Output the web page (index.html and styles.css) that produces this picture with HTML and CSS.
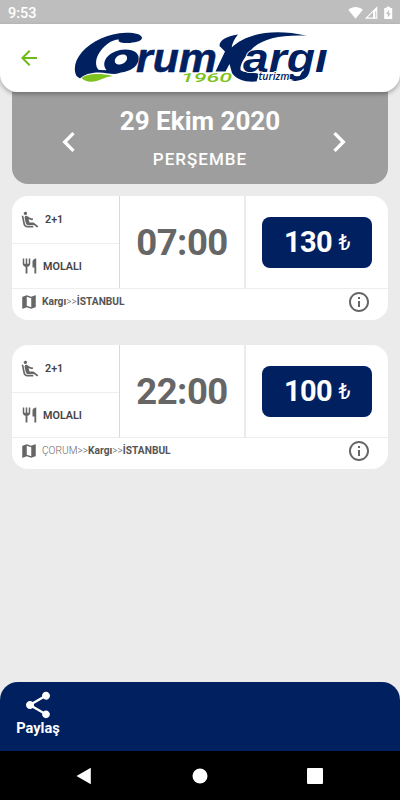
FILE: index.html
```html
<!DOCTYPE html>
<html lang="tr">
<head>
    <meta charset="UTF-8">
    <meta name="viewport" content="width=device-width, initial-scale=1.0">
    <title>Çorum Kargı Turizm</title>
    <link rel="stylesheet" href="styles.css">
</head>
<body>
    <svg class="sprite" width="0" height="0">
        <symbol id="seat" viewBox="0 0 24 24">
            <path d="M5.35 5.64c-.9-.64-1.12-1.88-.49-2.79.63-.9 1.88-1.12 2.79-.49.9.64 1.12 1.88.49 2.79-.64.9-1.88 1.12-2.79.49zM16 19H8.93c-1.48 0-2.74-1.08-2.96-2.54L4 7H2l1.99 9.76C4.37 19.2 6.47 21 8.94 21H16v-2zm.23-4h-4.88l-1.03-4.1c1.58.89 3.28 1.54 5.15 1.22V9.99c-1.63.31-3.44-.27-4.69-1.25L9.14 7.47c-.23-.18-.49-.3-.76-.38-.32-.09-.66-.12-.99-.06h-.02c-1.23.22-2.05 1.39-1.84 2.61l1.35 5.92C7.16 16.98 8.39 18 9.83 18h6.85l3.82 3 1.5-1.5-5.77-4.5z"/>
        </symbol>
        <symbol id="food" viewBox="0 0 24 24">
            <path d="M11 9H9V2H7v7H5V2H3v7c0 2.12 1.66 3.84 3.75 3.97V22h2.5v-9.03C11.34 12.84 13 11.12 13 9V2h-2v7zm5-3v8h2.5v8H21V2c-2.76 0-5 2.24-5 4z"/>
        </symbol>
        <symbol id="map" viewBox="0 0 24 24">
            <path d="M20.5 3l-.16.03L15 5.1 9 3 3.36 4.9c-.21.07-.36.25-.36.48V20.5c0 .28.22.5.5.5l.16-.03L9 18.9l6 2.1 5.64-1.9c.21-.07.36-.25.36-.48V3.5c0-.28-.22-.5-.5-.5zM15 19l-6-2.11V5l6 2.11V19z"/>
        </symbol>
        <symbol id="info" viewBox="0 0 24 24">
            <path d="M11 7h2v2h-2zm0 4h2v6h-2zm1-9C6.48 2 2 6.48 2 12s4.48 10 10 10 10-4.48 10-10S17.52 2 12 2zm0 18c-4.41 0-8-3.59-8-8s3.59-8 8-8 8 3.59 8 8-3.59 8-8 8z"/>
        </symbol>
    </svg>

    <div class="status-bar">
        <span class="clock">9:53</span>
        <svg width="46" height="14" viewBox="0 0 46 14">
            <path d="M.3 3.800C4.500 .2 10.600 .2 14.800 3.800L7.550 12.800z" fill="#fff"/>
            <path fill-rule="evenodd" d="M16.800 12.800L29.300 .3v12.500zM19.500 11.500H25V5.900z" fill="#fff"/>
            <path d="M27.300 5.200h.9v6.300h-.9z" fill="#bebebe"/>
            <path d="M38.500 .7h3.500v1.300h2.200v11H36.200v-11h2.300z" fill="#fff"/>
            <path d="M40.800 3.800l-2.800 4.200h1.800v3.500l2.900-4.300h-1.900z" fill="#bebebe"/>
        </svg>
    </div>

    <header class="header">
        <svg class="back" width="24" height="24" viewBox="0 0 24 24">
            <path d="M20 11H7.830l5.590-5.590L12 4l-8 8 8 8 1.410-1.410L7.830 13H20v-2z"/>
        </svg>
        <svg class="logo" width="256" height="56" viewBox="74 30 256 56">
            <!-- front swoosh -->
            <path class="navy" d="M142 37.500C141 34 135 32.600 126 32.700C108 33.500 92 41 82 52C75 60 73 69 76.500 76L80 78.500C85 73.500 96 71 108 73.500L117 74L108 70.200L99 70C95 67 95.500 60 98 55C103 46 111 39.500 119 39.500C117 42.500 124 43.500 130 43C137 42 142 41 142 37.500z"/>
            <path class="navy" fill-rule="evenodd" d="M125 49.500C135 49.500 140 54 138.500 60.500C137 67 130 71.500 121 72.500C115 75 107 74 106 69.500C100 60 111 50 125 49.500zM126.500 56C124 53 117.500 55 115.500 58.500C113.500 62 116 65 120 64.500C125.500 63.800 128.500 59 126.500 56z"/>
            <path class="green" d="M81.500 78C87 73.500 99 72.800 113 76C105 76.500 99 81.800 91 81.800C87 81.800 84 80.500 81.500 78z"/>
            <text class="word" x="136" y="71.500" textLength="81" lengthAdjust="spacingAndGlyphs">rum</text>
            <!-- road swoosh -->
            <path class="road" d="M219.500 46C219.500 40 226 36.500 238 34.500C234 39 232 44 231.700 47.500C244 36 268 27 307 35.700C280 34.500 261 39 251 50C243 59 240 65 240.500 70C245 73.500 252 72 259 74L256.500 81.500C246 82.500 236 79.500 232 73L229.500 64L225.500 71.500H215.500L225 51.500z"/>
            <text class="word outlined" x="243" y="71.500" textLength="85" lengthAdjust="spacingAndGlyphs">argı</text>
            <path class="navy" d="M290 81C296 80.500 300 77 302 71.500L309.500 70C307 79 300 81.500 290 81z"/>
            <text class="year" x="181" y="81.500" textLength="51" lengthAdjust="spacingAndGlyphs">1960</text>
            <text class="turizm" x="258.500" y="80" textLength="31" lengthAdjust="spacingAndGlyphs">turizm</text>
        </svg>
    </header>

    <main class="content">
        <div class="date-box">
            <svg class="arrow" width="40" height="40" viewBox="0 0 24 24"><path d="M15.410 7.410L14 6l-6 6 6 6 1.410-1.410L10.830 12z"/></svg>
            <div class="date">
                <div class="day">29 Ekim 2020</div>
                <div class="weekday">PERŞEMBE</div>
            </div>
            <svg class="arrow" width="40" height="40" viewBox="0 0 24 24"><path d="M10 6L8.590 7.410 13.170 12l-4.580 4.590L10 18l6-6z"/></svg>
        </div>

        <div class="trip">
            <div class="trip-main">
                <div class="features">
                    <div class="feature seat"><svg width="20" height="20"><use href="#seat"/></svg><span>2+1</span></div>
                    <div class="feature food"><svg width="19" height="18"><use href="#food"/></svg><span>MOLALI</span></div>
                </div>
                <div class="time">07:00</div>
                <div class="price"><button class="buy">130 <span class="lira">₺</span></button></div>
            </div>
            <div class="route">
                <svg width="18" height="18"><use href="#map"/></svg>
                <span class="stops"><b>Kargı</b>&gt;&gt;<b>İSTANBUL</b></span>
                <svg class="info" width="24" height="24"><use href="#info"/></svg>
            </div>
        </div>

        <div class="trip">
            <div class="trip-main">
                <div class="features">
                    <div class="feature seat"><svg width="20" height="20"><use href="#seat"/></svg><span>2+1</span></div>
                    <div class="feature food"><svg width="19" height="18"><use href="#food"/></svg><span>MOLALI</span></div>
                </div>
                <div class="time">22:00</div>
                <div class="price"><button class="buy">100 <span class="lira">₺</span></button></div>
            </div>
            <div class="route">
                <svg width="18" height="18"><use href="#map"/></svg>
                <span class="stops">ÇORUM&gt;&gt;<b>Kargı</b>&gt;&gt;<b>İSTANBUL</b></span>
                <svg class="info" width="24" height="24"><use href="#info"/></svg>
            </div>
        </div>
    </main>

    <footer class="footer">
        <div class="share">
            <svg width="32" height="32" viewBox="0 0 24 24"><path d="M18 16.080c-.76 0-1.440.3-1.960.77L8.910 12.700c.05-.23.09-.46.09-.7s-.04-.47-.09-.7l7.050-4.110c.54.5 1.250.81 2.040.81 1.660 0 3-1.340 3-3s-1.340-3-3-3-3 1.340-3 3c0 .24.04.47.09.7L8.040 9.810C7.500 9.310 6.790 9 6 9c-1.660 0-3 1.340-3 3s1.340 3 3 3c.79 0 1.500-.31 2.040-.81l7.120 4.160c-.05.21-.08.43-.08.65 0 1.610 1.310 2.920 2.920 2.920s2.920-1.310 2.920-2.920-1.310-2.920-2.920-2.920z"/></svg>
            <span>Paylaş</span>
        </div>
    </footer>
    <nav class="nav-bar">
        <svg width="18" height="18" viewBox="0 0 18 18"><path d="M14.800 .8v16.400L.5 9z"/></svg>
        <svg width="18" height="18" viewBox="0 0 18 18"><circle cx="9" cy="9" r="7.500"/></svg>
        <svg width="18" height="18" viewBox="0 0 18 18"><rect x="1" y="1" width="16" height="16" rx="1"/></svg>
    </nav>
</body>
</html>
```
FILE: styles.css
```css
* {
    box-sizing: border-box;
}

body {
    display: flex;
    flex-direction: column;
    width: 400px;
    height: 800px;
    margin: 0;
    background-color: #ebebeb;
    color: #666;
    font-family: Roboto, sans-serif;
    overflow: hidden;
}

svg {
    display: block;
    flex-shrink: 0;
}

.sprite {
    position: absolute;
}

.status-bar {
    display: flex;
    justify-content: space-between;
    align-items: center;
    flex: 0 0 24px;
    padding: 2px 6px 0 8px;
    background-color: #bebebe;
    color: #fff;
    font-size: 14.5px;
    font-weight: 500;
}

.header {
    display: flex;
    align-items: center;
    flex: 0 0 68px;
    padding-left: 17px;
    background-color: #fff;
    border-radius: 0 0 18px 18px;
    box-shadow: 0 2px 4px rgba(0, 0, 0, 0.3);
    z-index: 1;
}

.back {
    fill: #6fb914;
}

.logo {
    margin-left: 33px;
}

.navy {
    fill: #002060;
}

.green {
    fill: #7dc21e;
}

.road {
    fill: #002060;
    stroke: #fff;
    stroke-width: 1.5px;
    paint-order: stroke;
}

.word {
    fill: #002060;
    stroke: #002060;
    stroke-width: 0.5px;
    font: italic bold 40px "Liberation Sans", sans-serif;
}

.outlined {
    stroke: #fff;
    stroke-width: 1.5px;
    paint-order: stroke;
}

.year {
    fill: #7dc21e;
    stroke: #fff;
    stroke-width: 1px;
    paint-order: stroke;
    font: italic 500 13.5px Roboto, sans-serif;
}

.turizm {
    fill: #002060;
    stroke: #fff;
    stroke-width: 2px;
    paint-order: stroke;
    font: italic 600 11.5px "Open Sans", sans-serif;
}

.content {
    flex: 1;
    padding: 0 12px;
}

.date-box {
    display: flex;
    justify-content: space-between;
    align-items: center;
    height: 91.5px;
    margin-bottom: 12.5px;
    padding: 8px 29px 0 37px;
    background-color: #9e9e9e;
    border-radius: 0 0 16px 16px;
    color: #fff;
    text-align: center;
}

.arrow {
    fill: #fff;
}

.date {
    padding: 0 8px 10px 0;
}

.day {
    font-size: 26px;
    font-weight: 700;
    line-height: 30px;
}

.weekday {
    margin-top: 15px;
    font-size: 17px;
    font-weight: 500;
    line-height: 17px;
    letter-spacing: 1px;
}

.trip {
    height: 124px;
    margin-bottom: 25px;
    background-color: #fff;
    border-radius: 16px;
}

.trip-main {
    display: grid;
    grid-template-columns: 108px 126px 1fr;
    height: 93px;
    border-bottom: 1px solid #eee;
}

.features {
    display: grid;
    grid-template-rows: 48px 1fr;
    border-right: 1px solid #d9d9d9;
}

.feature {
    display: flex;
    align-items: center;
    padding-left: 8px;
    color: #444;
    font-size: 10.8px;
    font-weight: 600;
}

.feature svg,
.route svg {
    fill: #666;
}

.seat {
    gap: 5px;
    border-bottom: 1px solid #eee;
}

.food {
    gap: 4px;
}

.time {
    display: flex;
    justify-content: center;
    align-items: center;
    border-right: 2px solid #ebebeb;
    font-size: 36.5px;
    font-weight: 700;
    letter-spacing: -0.5px;
}

.price {
    display: flex;
    justify-content: center;
    align-items: center;
}

.buy {
    width: 110px;
    height: 51px;
    padding: 0;
    background-color: #002060;
    border: none;
    border-radius: 8px;
    color: #fff;
    font: 700 29px Roboto, sans-serif;
    letter-spacing: -0.7px;
}

.lira {
    font-size: 22px;
    font-weight: 400;
    vertical-align: 2px;
}

.route {
    display: flex;
    align-items: center;
    height: 25px;
    padding: 0 17px 0 8px;
    font-size: 10.2px;
    font-weight: 300;
}

.stops {
    margin-left: 4px;
}

.stops b {
    color: #555;
    font-weight: 700;
}

.route .info {
    margin-left: auto;
}

.footer {
    flex: 0 0 69px;
    padding: 7px 16px;
    background-color: #002060;
    border-radius: 18px 18px 0 0;
}

.share {
    display: flex;
    flex-direction: column;
    align-items: center;
    width: 44px;
    color: #fff;
    font-size: 14.6px;
    font-weight: 700;
    line-height: 14px;
}

.share svg {
    fill: #fff;
}

.nav-bar {
    display: flex;
    justify-content: space-between;
    align-items: center;
    flex: 0 0 49px;
    padding: 0 76px;
    background-color: #000;
}

.nav-bar svg {
    fill: #fff;
}
```
